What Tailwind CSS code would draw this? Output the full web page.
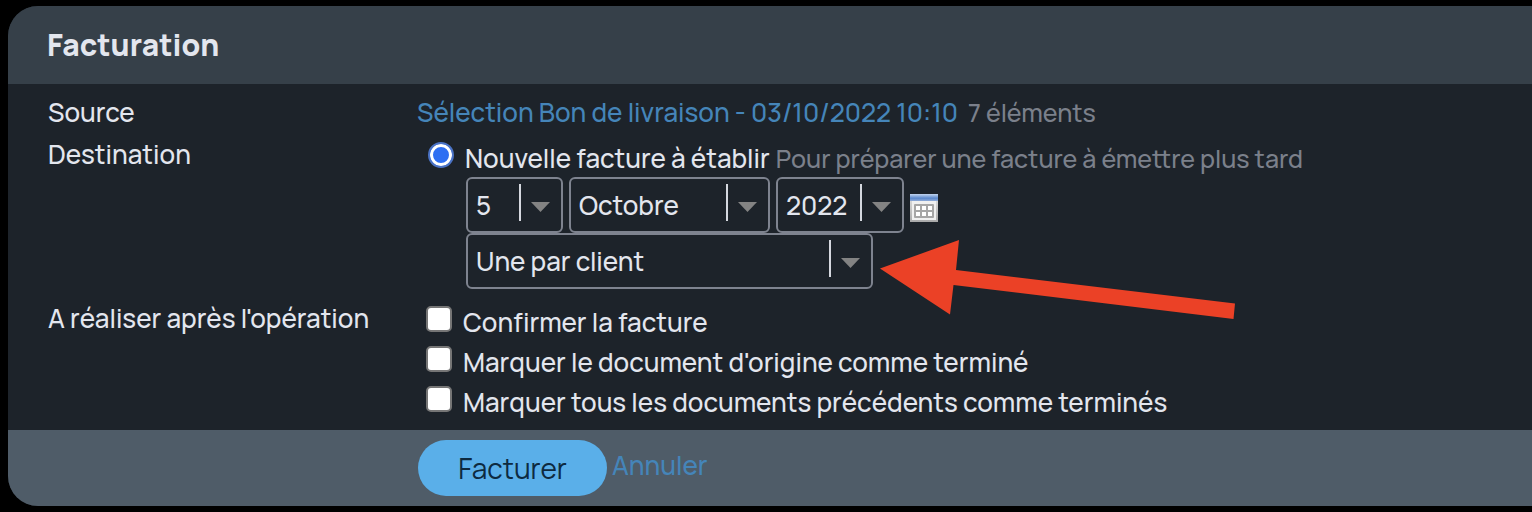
<!DOCTYPE html>
<html lang="fr">

<head>
  <meta charset="UTF-8">
  <meta name="viewport" content="width=device-width, initial-scale=1.0">
  <title>Facturation</title>
  <script src="https://cdn.jsdelivr.net/npm/@tailwindcss/browser@4"></script>
</head>

<body class="bg-black py-[6px] pl-[8px] font-['Manrope','Inter',sans-serif] font-medium text-[26px] leading-[40px] text-[#e3e6ee]">

  <form class="bg-[#1d232a] rounded-l-[30px] overflow-hidden">
    <header class="bg-[#364049] h-[78px] px-[39px] flex items-center">
      <h1 class="text-[30px] font-extrabold">Facturation</h1>
    </header>

    <div class="pl-[40px] pt-[8px] pb-[8px]">
      <div class="flex">
        <div class="w-[369px] shrink-0">Source</div>
        <div class="flex items-baseline gap-[10px]">
          <a href="#" class="text-[#4585b9]">Sélection Bon de livraison - 03/10/2022 10:10</a>
          <span class="text-[25px] text-[#7b808b]">7 éléments</span>
        </div>
      </div>

      <div class="flex pt-[1px]">
        <div class="w-[369px] shrink-0">Destination</div>
        <div class="pl-[11px] pt-[4px]">
          <div class="flex gap-[11px] h-[39px]">
            <input type="radio" id="nouvelle" name="destination" checked class="appearance-none shrink-0 mt-[4px] size-[26px] rounded-full border-2 border-[#4a72c4] bg-[#2f6ff2] inset-ring-[3px] inset-ring-white">
            <div class="flex items-baseline gap-[6px]">
              <label for="nouvelle">Nouvelle facture à établir</label>
              <span class="text-[25px] text-[#7b808b]">Pour préparer une facture à émettre plus tard</span>
            </div>
          </div>

          <div class="pl-[38px]">
            <div class="flex items-center gap-[6px]">
              <div class="relative">
                <select aria-label="Jour" class="appearance-none block w-[97px] h-[56px] pl-[8px] border-2 border-[#7e838f] rounded-[6px]">
                  <option>5</option>
                </select>
                <span class="absolute right-[42px] top-[7px] w-[2px] h-[37px] bg-[#d5d8df] pointer-events-none"></span>
                <svg class="absolute right-[13px] top-[25px] w-[19px] h-[10px] pointer-events-none" viewBox="0 0 19 10"><path d="M0 0H19L9.5 10Z" fill="#838383"/></svg>
              </div>
              <div class="relative">
                <select aria-label="Mois" class="appearance-none block w-[201px] h-[56px] pl-[8px] border-2 border-[#7e838f] rounded-[6px]">
                  <option>Octobre</option>
                </select>
                <span class="absolute right-[42px] top-[7px] w-[2px] h-[37px] bg-[#d5d8df] pointer-events-none"></span>
                <svg class="absolute right-[13px] top-[25px] w-[19px] h-[10px] pointer-events-none" viewBox="0 0 19 10"><path d="M0 0H19L9.5 10Z" fill="#838383"/></svg>
              </div>
              <div class="relative">
                <select aria-label="Année" class="appearance-none block w-[128px] h-[56px] pl-[8px] border-2 border-[#7e838f] rounded-[6px]">
                  <option>2022</option>
                </select>
                <span class="absolute right-[42px] top-[7px] w-[2px] h-[37px] bg-[#d5d8df] pointer-events-none"></span>
                <svg class="absolute right-[13px] top-[25px] w-[19px] h-[10px] pointer-events-none" viewBox="0 0 19 10"><path d="M0 0H19L9.5 10Z" fill="#838383"/></svg>
              </div>
              <button type="button" aria-label="Calendrier" class="mt-[6px]">
                <svg class="block size-[28px]" viewBox="0 0 28 28">
                  <defs>
                    <linearGradient id="bar" x1="0" x2="0" y1="0" y2="1">
                      <stop offset="0" stop-color="#c3d5ef"/>
                      <stop offset="0.6" stop-color="#5b88cc"/>
                      <stop offset="1" stop-color="#8fabd8"/>
                    </linearGradient>
                    <linearGradient id="edge" x1="0" x2="0" y1="0" y2="1">
                      <stop offset="0" stop-color="#e6e6e6"/>
                      <stop offset="1" stop-color="#a9a9a9"/>
                    </linearGradient>
                  </defs>
                  <rect width="28" height="28" fill="url(#edge)"/>
                  <rect x="2" y="6" width="24" height="20" fill="#f0f0f0"/>
                  <rect width="28" height="7" fill="url(#bar)"/>
                  <rect x="4" y="10" width="20" height="14" rx="1" fill="#a6a6a6"/>
                  <path d="M6 12h4v4H6zM12 12h4v4h-4zM18 12h4v4h-4zM6 18h4v4H6zM12 18h4v4h-4zM18 18h4v4h-4z" fill="#fff"/>
                </svg>
              </button>
            </div>

            <div class="relative w-[407px]">
              <select aria-label="Regroupement" class="appearance-none block w-full h-[56px] pl-[8px] border-2 border-[#7e838f] rounded-[6px]">
                <option>Une par client</option>
              </select>
              <span class="absolute right-[42px] top-[7px] w-[2px] h-[37px] bg-[#d5d8df] pointer-events-none"></span>
              <svg class="absolute right-[13px] top-[25px] w-[19px] h-[10px] pointer-events-none" viewBox="0 0 19 10"><path d="M0 0H19L9.5 10Z" fill="#838383"/></svg>
              <svg class="absolute left-[414px] top-[7px] w-[356px] h-[80px] max-w-none pointer-events-none" viewBox="0 0 356 80"><path d="M0 28.5L79 0L76 30L355 63.500L353.500 79L73.500 45L70 74.500Z" fill="#eb4126"/></svg>
            </div>
          </div>
        </div>
      </div>

      <div class="flex pt-[9px]">
        <div class="w-[369px] shrink-0">A réaliser après l'opération</div>
        <div class="pl-[9px] pt-[4px]">
          <div class="flex gap-[11px]">
            <input type="checkbox" id="confirmer" class="appearance-none shrink-0 mt-[4px] size-[26px] rounded-[5px] border-2 border-[#767676] bg-white">
            <label for="confirmer">Confirmer la facture</label>
          </div>
          <div class="flex gap-[11px]">
            <input type="checkbox" id="origine" class="appearance-none shrink-0 mt-[4px] size-[26px] rounded-[5px] border-2 border-[#767676] bg-white">
            <label for="origine">Marquer le document d'origine comme terminé</label>
          </div>
          <div class="flex gap-[11px]">
            <input type="checkbox" id="precedents" class="appearance-none shrink-0 mt-[4px] size-[26px] rounded-[5px] border-2 border-[#767676] bg-white">
            <label for="precedents">Marquer tous les documents précédents comme terminés</label>
          </div>
        </div>
      </div>
    </div>

    <footer class="bg-[#4f5c68] h-[76px] pl-[410px] flex items-center gap-[5px]">
      <button type="submit" class="w-[189px] h-[56px] rounded-full bg-[#5aafe9] text-[#0d2a40] text-[28px] font-normal">Facturer</button>
      <a href="#" class="text-[#4585b9] pb-[6px]">Annuler</a>
    </footer>
  </form>

</body>
</html>
